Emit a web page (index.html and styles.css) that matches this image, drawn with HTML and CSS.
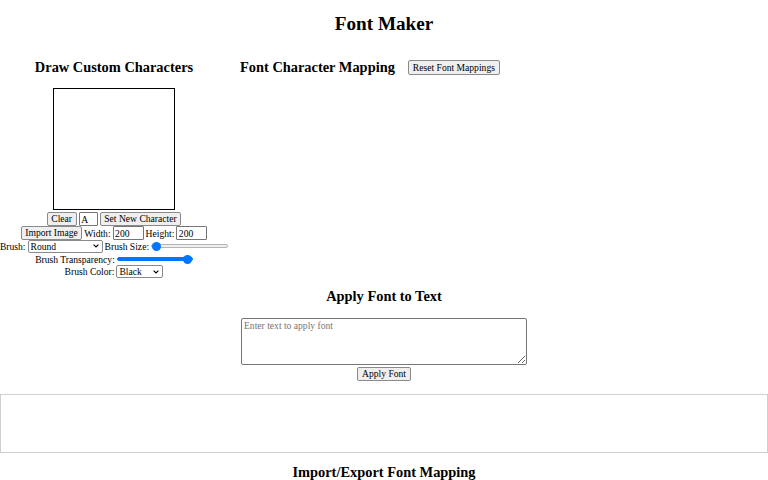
FILE: index.html
```html
<!DOCTYPE html>
<html lang="en">
<head>
<meta charset="utf-8">
<title>Font Maker</title>
<link rel="stylesheet" href="styles.css">
</head>
<body>
<h1 class="title">Font Maker</h1>
<div class="workspace">
  <section class="draw-panel">
    <h2 class="heading">Draw Custom Characters</h2>
    <canvas class="draw-canvas" width="120" height="120"></canvas>
    <div class="row row-tall">
      <button class="btn">Clear</button>
      <input class="text-input char-input" type="text" value="A">
      <button class="btn">Set New Character</button>
    </div>
    <div class="row row-tall">
      <button class="btn">Import Image</button>
      <span>Width:</span>
      <input class="text-input size-input" type="text" value="200">
      <span>Height:</span>
      <input class="text-input size-input" type="text" value="200">
    </div>
    <div class="row">
      <span>Brush:</span>
      <select class="select brush-select"><option>Round</option></select>
      <span>Brush Size:</span>
      <input class="range range-empty" type="range" min="1" max="50" value="1">
    </div>
    <div class="row">
      <span>Brush Transparency:</span>
      <input class="range range-full" type="range" min="0" max="100" value="100">
    </div>
    <div class="row">
      <span>Brush Color:</span>
      <select class="select color-select"><option>Black</option></select>
    </div>
  </section>
  <section class="mapping-panel">
    <div class="mapping-head">
      <h2 class="heading">Font Character Mapping</h2>
      <button class="btn btn-reset">Reset Font Mappings</button>
    </div>
  </section>
</div>
<section class="apply">
  <h2 class="heading">Apply Font to Text</h2>
  <textarea class="apply-text" placeholder="Enter text to apply font"></textarea>
  <button class="btn apply-btn">Apply Font</button>
</section>
<div class="output"></div>
<section class="io">
  <h2 class="heading">Import/Export Font Mapping</h2>
</section>
</body>
</html>
```
FILE: styles.css
```css
html, body {
  margin: 0;
  padding: 0;
  background: #fff;
}
body {
  font-family: "Liberation Serif", "Times New Roman", serif;
  font-size: 9.6px;
  line-height: 11px;
  color: #000;
}
.title {
  margin: 13px 0 0;
  font-size: 19.2px;
  line-height: 22px;
  font-weight: bold;
  text-align: center;
}
.heading {
  margin: 0;
  font-size: 14.4px;
  line-height: 17px;
  font-weight: bold;
}
.workspace {
  display: flex;
  gap: 12px;
  margin-top: 24px;
}
.draw-panel {
  width: 228px;
  display: flex;
  flex-direction: column;
  align-items: center;
  text-align: center;
}
.draw-canvas {
  display: block;
  margin-top: 12px;
  margin-bottom: 2px;
  width: 120px;
  height: 120px;
  border: 1px solid #000;
  background: #fff;
}
.row {
  display: flex;
  align-items: center;
  justify-content: center;
  gap: 2px;
  height: 12.7px;
  white-space: nowrap;
}
.row-tall {
  height: 14px;
}
.btn {
  box-sizing: border-box;
  height: 14px;
  margin: 0;
  padding: 0 3.6px;
  font-family: "Liberation Serif", "Times New Roman", serif;
  font-size: 9.6px;
  line-height: 12px;
  color: #000;
  background: #efefef;
  border: 1px solid #8a8a8a;
  border-radius: 2px;
}
.text-input {
  box-sizing: border-box;
  height: 14px;
  margin: 0;
  padding: 0 1.5px;
  font-family: "Liberation Serif", "Times New Roman", serif;
  font-size: 9.6px;
  color: #000;
  background: #fff;
  border: 1px solid #767676;
  border-radius: 1px;
}
.char-input { width: 19px; }
.size-input { width: 31px; }
.select {
  -webkit-appearance: none;
  appearance: none;
  box-sizing: border-box;
  height: 13px;
  margin: 0;
  padding: 0 0 0 2px;
  font-family: "Liberation Serif", "Times New Roman", serif;
  font-size: 9.6px;
  line-height: 11px;
  color: #000;
  border: 1px solid #8a8a8a;
  border-radius: 2px;
  background-color: #fff;
  background-image: url("data:image/svg+xml;utf8,<svg xmlns='http://www.w3.org/2000/svg' width='6' height='4' viewBox='0 0 6 4'><path d='M0.6 0.6 L3 3 L5.4 0.6' fill='none' stroke='%23000' stroke-width='1.1'/></svg>");
  background-repeat: no-repeat;
  background-position: right 3px center;
  background-size: 6px 4px;
}
.brush-select { width: 75px; }
.color-select { width: 47px; }
.range {
  -webkit-appearance: none;
  appearance: none;
  box-sizing: border-box;
  width: 77px;
  height: 4px;
  margin: 0;
  padding: 0;
  border-radius: 2px;
}
.range-empty {
  background: #efefef;
  border: 1px solid #b5b5b5;
}
.range-full {
  width: 76px;
  background: #0075ff;
  border: 1px solid #0075ff;
}
.range::-webkit-slider-thumb {
  -webkit-appearance: none;
  appearance: none;
  width: 9px;
  height: 9px;
  border-radius: 50%;
  background: #0075ff;
  border: none;
}
.mapping-head {
  display: flex;
  align-items: center;
  gap: 13px;
}
.btn-reset {
  height: 15px;
  padding: 0 4px;
}
.apply {
  margin-top: 10px;
  display: flex;
  flex-direction: column;
  align-items: center;
}
.apply-text {
  box-sizing: border-box;
  display: block;
  width: 286px;
  height: 47px;
  margin: 13px 0 2px;
  padding: 1px 2px;
  font-family: "Liberation Serif", "Times New Roman", serif;
  font-size: 9.6px;
  line-height: 11px;
  border: 1px solid #767676;
  border-radius: 2px;
  resize: vertical;
}
.apply-text::placeholder {
  color: #757575;
}
.output {
  box-sizing: border-box;
  margin-top: 13px;
  width: 100%;
  height: 59px;
  border: 1px solid #cfcfcf;
}
.io {
  margin-top: 11px;
  text-align: center;
}
```
